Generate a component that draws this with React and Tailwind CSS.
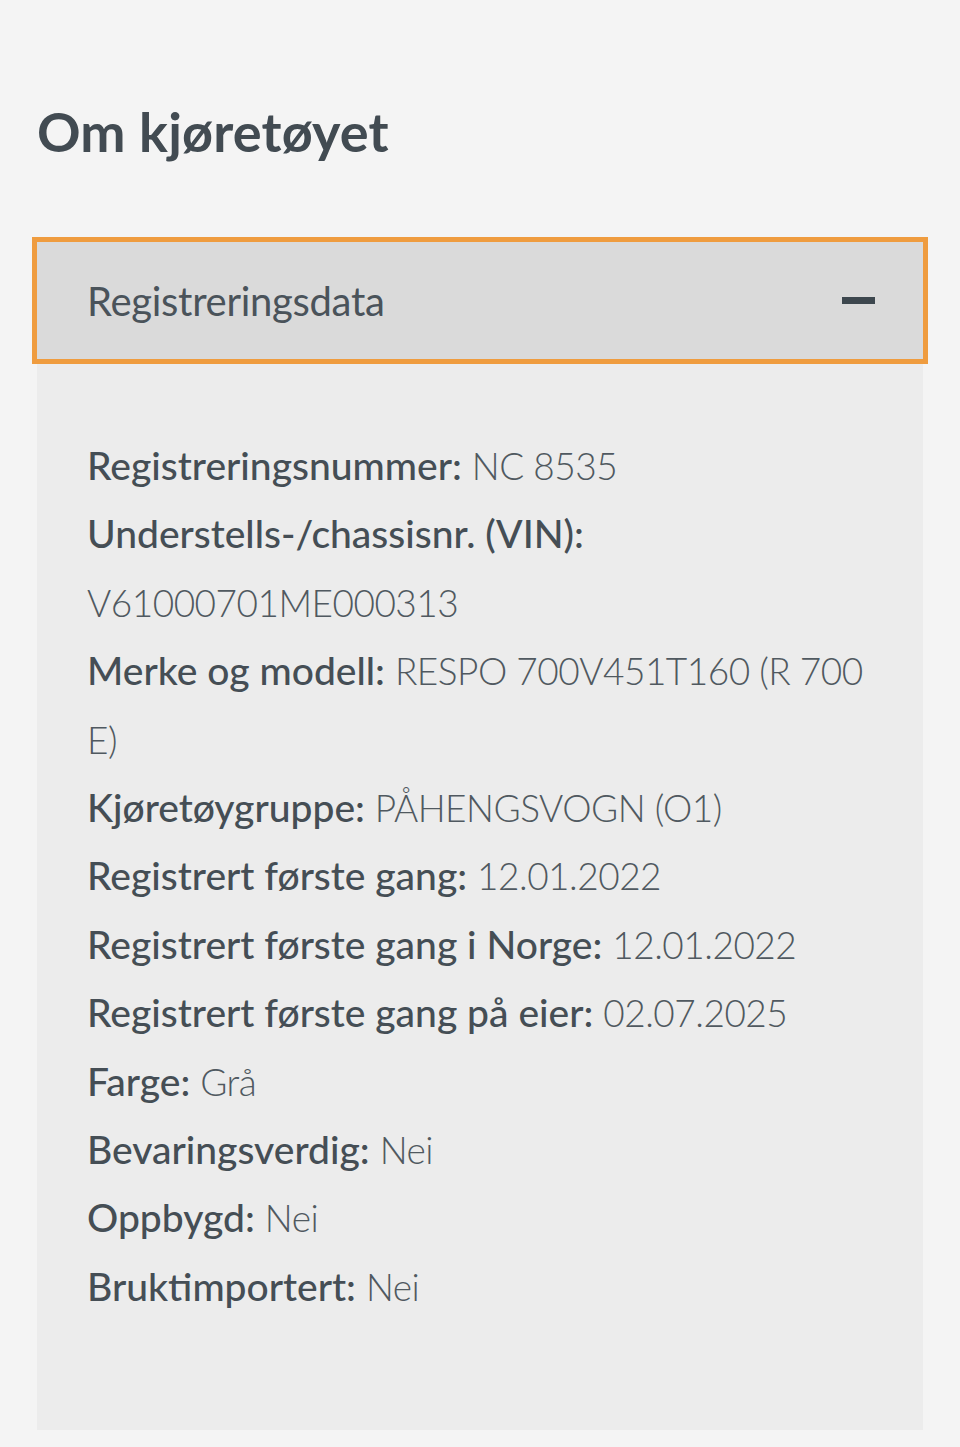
import React, { useState } from 'react';

const rows = [
  ['Registreringsnummer:', 'NC 8535'],
  ['Understells-/chassisnr. (VIN):', 'V61000701ME000313'],
  ['Merke og modell:', 'RESPO 700V451T160 (R 700 E)'],
  ['Kjøretøygruppe:', 'PÅHENGSVOGN (O1)'],
  ['Registrert første gang:', '12.01.2022'],
  ['Registrert første gang i Norge:', '12.01.2022'],
  ['Registrert første gang på eier:', '02.07.2025'],
  ['Farge:', 'Grå'],
  ['Bevaringsverdig:', 'Nei'],
  ['Oppbygd:', 'Nei'],
  ['Bruktimportert:', 'Nei'],
];

export default function App() {
  const [open, setOpen] = useState(true);

  return (
    <div className="min-h-[1447px] bg-[#f4f4f4] px-[37px] pt-[100px] font-['Lato',sans-serif] text-[#454e55]">
      <h1 className="text-[54px] font-bold leading-[64px] tracking-[0.2px] text-[#424b52]">Om kjøretøyet</h1>

      <div className="mt-[78px]">
        {/* header med fokusramme */}
        <button
          onClick={() => setOpen(!open)}
          className="relative z-10 flex h-[117px] w-full items-center justify-between bg-[#dadada] pl-[50px] pr-[48px] text-left ring-[5px] ring-[#ef9c3f]"
        >
          <span className="text-[40px] font-normal tracking-[-0.3px] text-[#4a535a]">Registreringsdata</span>
          <span className="block h-[7px] w-[33px] bg-[#3d474e]" />
        </button>

        {open && (
          <div className="bg-[#ececec] pl-[50px] pr-[46px] pt-[72px] pb-[110px]">
            {rows.map(([label, value]) => (
              <p key={label} className="text-[39px] leading-[68.4px]">
                <span className="font-medium text-[#454e55]">{label}</span>{' '}
                <span className="text-[37px] leading-none font-light tracking-[-0.5px] text-[#505960]">{value}</span>
              </p>
            ))}
          </div>
        )}
      </div>
    </div>
  );
}
